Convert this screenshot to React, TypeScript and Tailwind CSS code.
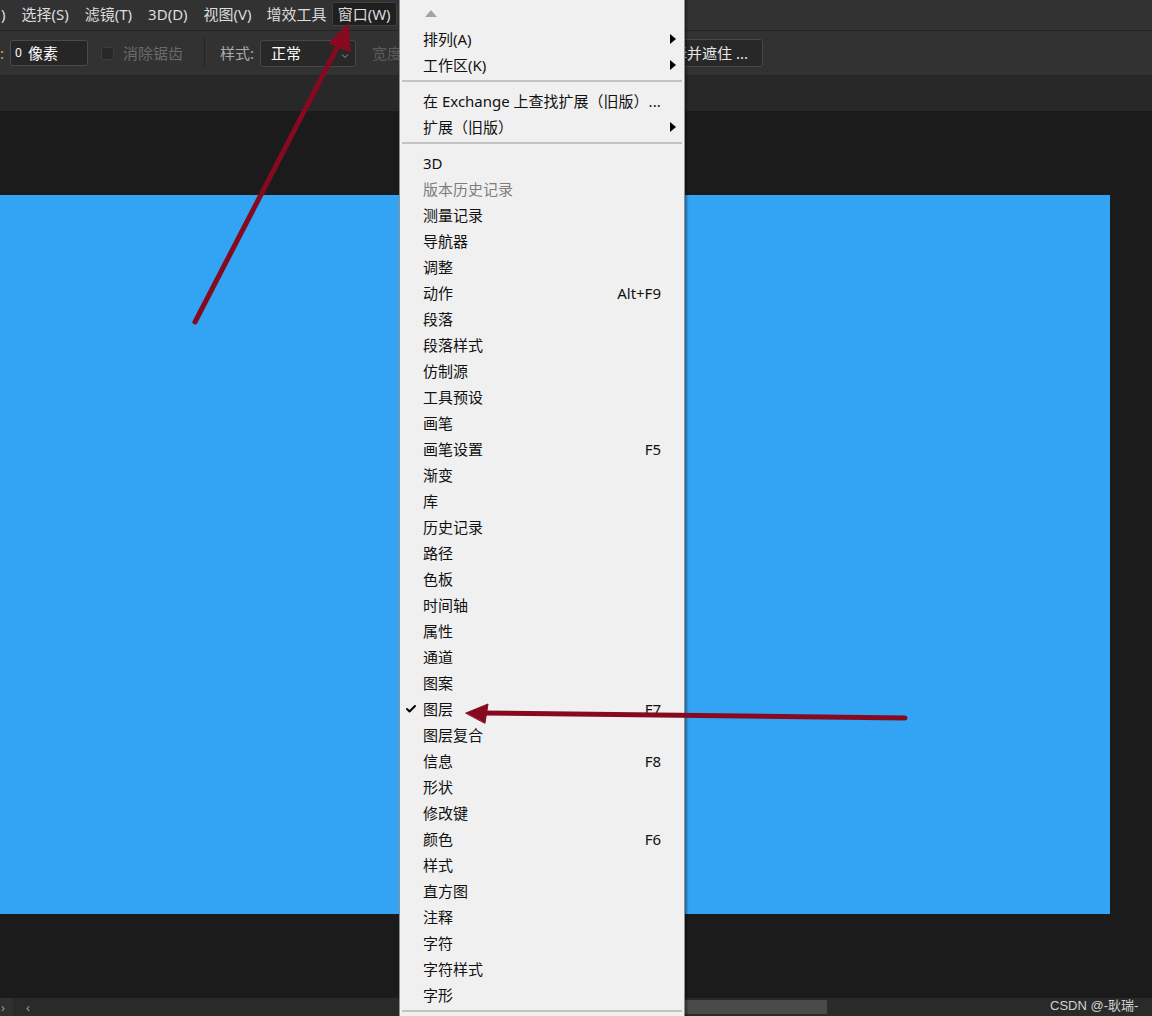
import { Check } from "lucide-react";

type Item = { label: string; key?: string; sub?: boolean; off?: boolean; on?: boolean };

const topItems: Item[] = [
  { label: "排列(A)", sub: true },
  { label: "工作区(K)", sub: true },
];

const extItems: Item[] = [
  { label: "在 Exchange 上查找扩展（旧版）..." },
  { label: "扩展（旧版）", sub: true },
];

const panelItems: Item[] = [
  { label: "3D" },
  { label: "版本历史记录", off: true },
  { label: "测量记录" },
  { label: "导航器" },
  { label: "调整" },
  { label: "动作", key: "Alt+F9" },
  { label: "段落" },
  { label: "段落样式" },
  { label: "仿制源" },
  { label: "工具预设" },
  { label: "画笔" },
  { label: "画笔设置", key: "F5" },
  { label: "渐变" },
  { label: "库" },
  { label: "历史记录" },
  { label: "路径" },
  { label: "色板" },
  { label: "时间轴" },
  { label: "属性" },
  { label: "通道" },
  { label: "图案" },
  { label: "图层", key: "F7", on: true },
  { label: "图层复合" },
  { label: "信息", key: "F8" },
  { label: "形状" },
  { label: "修改键" },
  { label: "颜色", key: "F6" },
  { label: "样式" },
  { label: "直方图" },
  { label: "注释" },
  { label: "字符" },
  { label: "字符样式" },
  { label: "字形" },
];

const font = "font-['Noto_Sans','Noto_Sans_CJK_SC',sans-serif]";

const MenuRow = ({ item }: { item: Item }) => (
  <div className="relative flex h-[26px] items-center pl-[23px] pr-[23px]">
    {item.on && (
      <Check className="absolute left-[5px] top-[7px] size-[12px] text-black" strokeWidth={4} />
    )}
    <span className={item.off ? "text-[#7d7d7d]" : "text-[#111]"}>{item.label}</span>
    {item.key && <span className="ml-auto text-[#111]">{item.key}</span>}
    {item.sub && (
      <span className="absolute right-[8px] top-[8px] h-0 w-0 border-y-[5px] border-l-[6px] border-y-transparent border-l-black" />
    )}
  </div>
);

const Separator = () => (
  <div className="flex h-[10px] items-start px-[2px] pt-[2px]">
    <div className="h-[2px] w-full bg-[#c4c4c4]" />
  </div>
);

const WindowMenu = () => (
  <div className="absolute left-[399px] top-0 w-[286px] border-x border-[#8f8f8f] bg-[#f0f0f0] text-[15px] leading-none shadow-[2px_0_2px_rgba(0,0,0,0.35)]">
    <div className="flex h-[26px] items-center pl-[25px]">
      <span className="h-0 w-0 border-x-[6px] border-b-[7px] border-x-transparent border-b-[#a3a3a3]" />
    </div>
    {topItems.map((i) => (
      <MenuRow key={i.label} item={i} />
    ))}
    <Separator />
    {extItems.map((i) => (
      <MenuRow key={i.label} item={i} />
    ))}
    <Separator />
    {panelItems.map((i) => (
      <MenuRow key={i.label} item={i} />
    ))}
    <Separator />
  </div>
);

const Arrows = () => (
  <svg className="pointer-events-none absolute inset-0" width="1152" height="1016" viewBox="0 0 1152 1016">
    <g fill="#860a1f" stroke="#860a1f" strokeLinecap="round">
      <line x1="195" y1="322" x2="340" y2="42" strokeWidth="5" />
      <polygon points="348,24 329,43 350,52" strokeWidth="1" />
      <line x1="905" y1="718" x2="482" y2="713" strokeWidth="5" />
      <polygon points="466,713 488,704 485,723" strokeWidth="1" />
    </g>
  </svg>
);

export default function App() {
  return (
    <div className={`relative flex h-[1016px] w-[1152px] flex-col overflow-hidden bg-[#1b1b1b] ${font}`}>
      {/* menu bar */}
      <div className="flex h-[31px] shrink-0 items-center border-b border-[#242424] bg-[#323232] pb-[2px] text-[15px] leading-none text-[#dddddd]">
        <span className="pl-[1px] pr-[8px]">)</span>
        <span className="px-[8px]">选择(S)</span>
        <span className="px-[8px]">滤镜(T)</span>
        <span className="px-[8px]">3D(D)</span>
        <span className="px-[8px]">视图(V)</span>
        <span className="pl-[7px] pr-[5px]">增效工具</span>
        <span className="flex h-[24px] items-center rounded-[2px] border border-[#404040] bg-[#1f1f1f] px-[5px]">窗口(W)</span>
      </div>

      {/* options bar */}
      <div className="flex h-[45px] shrink-0 items-center border-b border-[#262626] bg-[#323232] text-[15px] leading-none">
        <span className="w-[10px] text-[#c9a96b]">:</span>
        <div className="flex h-[26px] w-[78px] items-center gap-[6px] rounded-[2px] border border-[#4a4a4a] bg-[#262626] pl-[4px] text-white">
          <span className="text-[12px]">0</span>
          <span>像素</span>
        </div>
        <span className="ml-[13px] h-[13px] w-[13px] rounded-[2px] border border-[#3c3c3c] bg-[#282828]" />
        <span className="ml-[9px] text-[#6a6a6a]">消除锯齿</span>
        <span className="ml-[21px] h-[30px] w-px bg-[#242424]" />
        <span className="ml-[15px] text-[#a9a9a9]">样式:</span>
        <div className="ml-[6px] flex h-[27px] w-[96px] items-center rounded-[3px] border border-[#474747] bg-[#282828] pl-[10px] pr-[6px] text-white">
          <span>正常</span>
          <svg className="ml-auto mt-[6px]" width="8" height="6" viewBox="0 0 8 6">
            <path d="M1 1.5 L4 4.5 L7 1.5" fill="none" stroke="#9a9a9a" strokeWidth="1" />
          </svg>
        </div>
        <span className="ml-[16px] text-[#5c5c5c]">宽度</span>
        <div className="ml-[242px] flex h-[28px] items-center rounded-[3px] border border-[#484848] bg-[#282828] pl-[12px] pr-[14px] text-[#e6e6e6]">
          选择并遮住 ...
        </div>
      </div>

      {/* tab bar */}
      <div className="h-[35px] shrink-0 bg-[#282828]" />

      {/* canvas */}
      <div className="flex-1 pt-[84px]">
        <div className="h-[719px] w-[1110px] bg-[#33a3f3]" />
      </div>

      {/* bottom scroll bar */}
      <div className="flex h-[18px] shrink-0 items-center bg-[#2a2a2a] text-[13px] leading-none text-[#9a9a9a]">
        <span className="flex h-full w-[13px] items-center bg-[#303030] pl-[1px]">›</span>
        <span className="ml-[13px]">‹</span>
        <div className="ml-[653px] h-[14px] w-[144px] bg-[#4a4a4a]" />
      </div>

      <WindowMenu />
      <Arrows />

      <span className="absolute left-[1050px] top-[999px] font-['Liberation_Sans','Noto_Sans_CJK_SC',sans-serif] text-[13px] leading-none text-[#d2d2d2]">
        CSDN @-耿瑞-
      </span>
    </div>
  );
}
